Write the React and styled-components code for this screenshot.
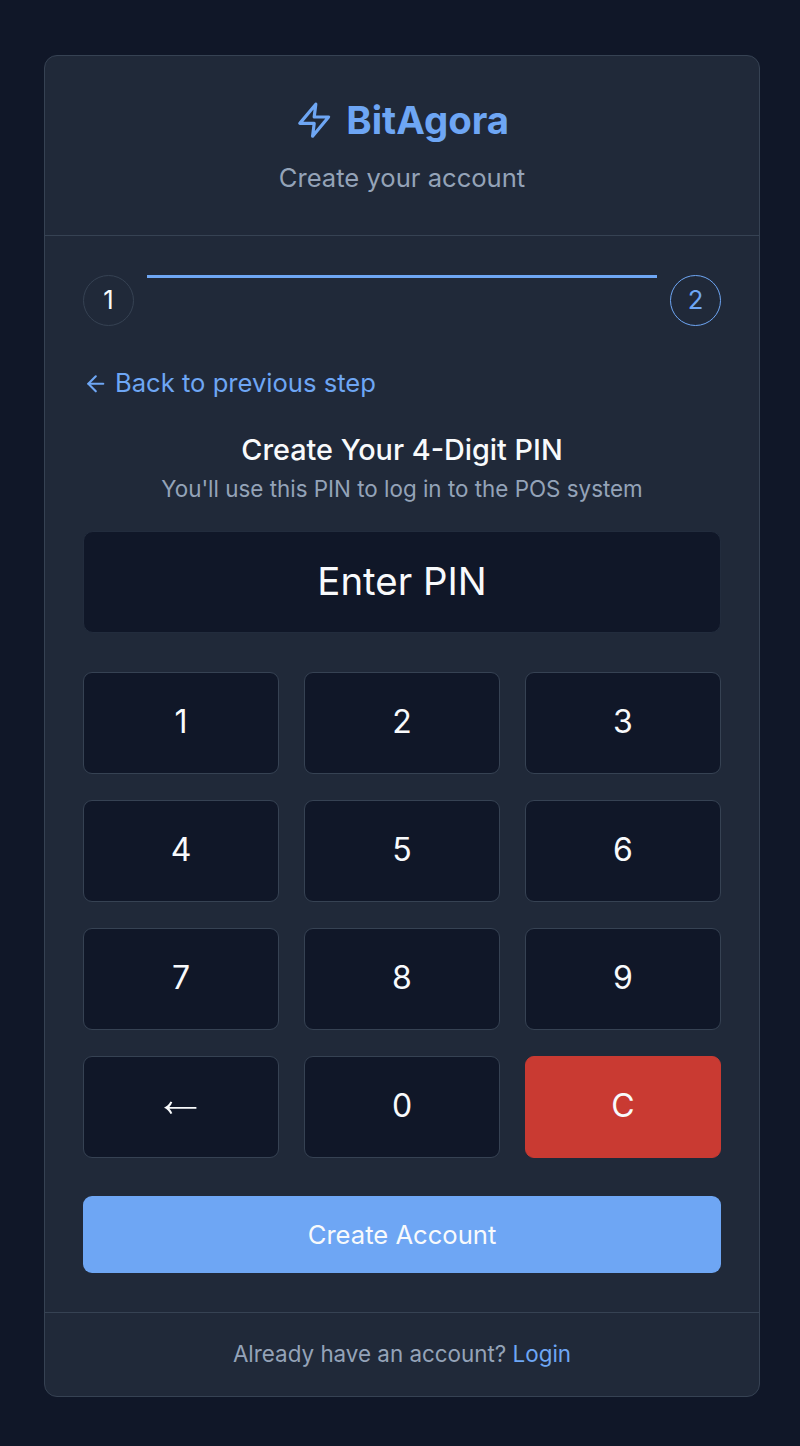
import React from "react";
import styled, { createGlobalStyle, css } from "styled-components";
import { ArrowLeft } from "lucide-react";

const GlobalStyle = createGlobalStyle`
  *, *::before, *::after { box-sizing: border-box; }
  body { margin: 0; background: #101728; font-family: Inter, sans-serif; }
  button { font-family: inherit; }
`;

const Page = styled.main`
  min-height: 1446px;
  padding: 55px 40px 49px 44px;
  background: #101728;
`;

const Card = styled.section`
  height: 1342px;
  border: 1px solid #364253;
  border-radius: 13px;
  background: #202939;
`;

const Header = styled.header`
  height: 180px;
  padding-top: 38px;
  border-bottom: 1px solid #364253;
  text-align: center;
`;

const Brand = styled.div`
  display: flex;
  align-items: center;
  justify-content: center;
  gap: 13px;
  height: 52px;
  color: #6ea6f4;
`;

const BoltIcon = styled.svg`
  width: 38.4px;
  height: 38.4px;
  fill: none;
  stroke: currentColor;
  stroke-width: 2;
  stroke-linecap: round;
  stroke-linejoin: round;
`;

const BrandName = styled.h1`
  margin: 0;
  font-size: 38.4px;
  line-height: 52px;
  font-weight: 700;
`;

const Tagline = styled.p`
  margin: 13px 0 0;
  color: #94a3b8;
  font-size: 25.6px;
  line-height: 38px;
`;

const Body = styled.div`
  height: 1076px;
  padding: 39px 38px 0;
`;

const Steps = styled.div`
  display: flex;
  align-items: flex-start;
  gap: 13px;
  height: 51px;
`;

const Step = styled.div`
  display: flex;
  align-items: center;
  justify-content: center;
  width: 51px;
  height: 51px;
  padding-bottom: 2px;
  border: 1px solid ${(p) => (p.$active ? "#6ea6f4" : "#364253")};
  border-radius: 50%;
  color: ${(p) => (p.$active ? "#6ea6f4" : "#f8fafc")};
  font-size: 25.6px;
`;

const StepLine = styled.div`
  flex: 1;
  height: 3px;
  background: #6ea6f4;
`;

const BackButton = styled.button`
  display: flex;
  align-items: center;
  gap: 6.4px;
  height: 38px;
  margin-top: 38px;
  padding: 0;
  border: 0;
  background: none;
  color: #6ea6f4;
  font-size: 25.6px;

  svg {
    margin-top: 1px;
  }
`;

const BackLabel = styled.span`
  padding-bottom: 2px;
`;

const Title = styled.h2`
  margin: 26px 0 0;
  color: #f8fafc;
  font-size: 28.8px;
  line-height: 44px;
  font-weight: 500;
  text-align: center;
`;

const Hint = styled.p`
  margin: 0;
  color: #94a3b8;
  font-size: 22.4px;
  line-height: 34px;
  text-align: center;
`;

const PinDisplay = styled.div`
  height: 102px;
  margin-top: 25px;
  border: 1px solid #222c3d;
  border-radius: 10px;
  background: #101728;
  color: #f8fafc;
  font-size: 38.4px;
  line-height: 98px;
  text-align: center;
`;

const Keypad = styled.div`
  display: grid;
  grid-template-columns: repeat(3, 196px);
  grid-auto-rows: 102px;
  justify-content: space-between;
  row-gap: 26px;
  margin-top: 39px;
`;

const dangerKey = css`
  border-color: #c93a32;
  background: #c93a32;
`;

const Key = styled.button`
  padding: 0 0 4px;
  border: 1px solid #364253;
  border-radius: 9px;
  background: #101728;
  color: #f8fafc;
  font-size: 32px;
  ${(p) => p.$danger && dangerKey}
`;

const BackspaceIcon = styled.svg`
  display: block;
  width: 34px;
  height: 14px;
  margin: 6px 0 0 79px;
  fill: currentColor;
`;

const SubmitButton = styled.button`
  width: 100%;
  height: 77px;
  margin-top: 38px;
  border: 0;
  border-radius: 9px;
  background: #6ea6f4;
  color: #f8fafc;
  font-size: 25.6px;
`;

const Footer = styled.footer`
  height: 84px;
  border-top: 1px solid #364253;
  color: #94a3b8;
  font-size: 22.4px;
  line-height: 82px;
  text-align: center;
`;

const LoginLink = styled.a`
  color: #6ea6f4;
`;

const keys = ["1", "2", "3", "4", "5", "6", "7", "8", "9", "back", "0", "C"];

function Backspace() {
  return (
    <BackspaceIcon viewBox="0 0 34 14" aria-hidden="true">
      <path d="M1 6.8C3.9 5.5 6 3.5 7.5 0.6L9.3 1.3C8.6 3.1 7.6 4.7 6.4 5.9H33.4V7.7H6.4C7.6 8.9 8.6 10.5 9.3 12.3L7.5 13C6 10.1 3.9 8.1 1 6.8Z" />
    </BackspaceIcon>
  );
}

export default function App() {
  return (
    <Page>
      <GlobalStyle />
      <Card>
        <Header>
          <Brand>
            <BoltIcon viewBox="0 0 24 24" aria-hidden="true">
              <polygon points="13 2 3 14 12 14 11 22 21 10 12 10 13 2" />
            </BoltIcon>
            <BrandName>BitAgora</BrandName>
          </Brand>
          <Tagline>Create your account</Tagline>
        </Header>
        <Body>
          <Steps>
            <Step>1</Step>
            <StepLine />
            <Step $active>2</Step>
          </Steps>
          <BackButton>
            <ArrowLeft size={25.6} />
            <BackLabel>Back to previous step</BackLabel>
          </BackButton>
          <Title>Create Your 4-Digit PIN</Title>
          <Hint>You'll use this PIN to log in to the POS system</Hint>
          <PinDisplay>Enter PIN</PinDisplay>
          <Keypad>
            {keys.map((k) => (
              <Key
                key={k}
                $danger={k === "C"}
                aria-label={k === "back" ? "Backspace" : undefined}
              >
                {k === "back" ? <Backspace /> : k}
              </Key>
            ))}
          </Keypad>
          <SubmitButton>Create Account</SubmitButton>
        </Body>
        <Footer>
          Already have an account? <LoginLink>Login</LoginLink>
        </Footer>
      </Card>
    </Page>
  );
}
